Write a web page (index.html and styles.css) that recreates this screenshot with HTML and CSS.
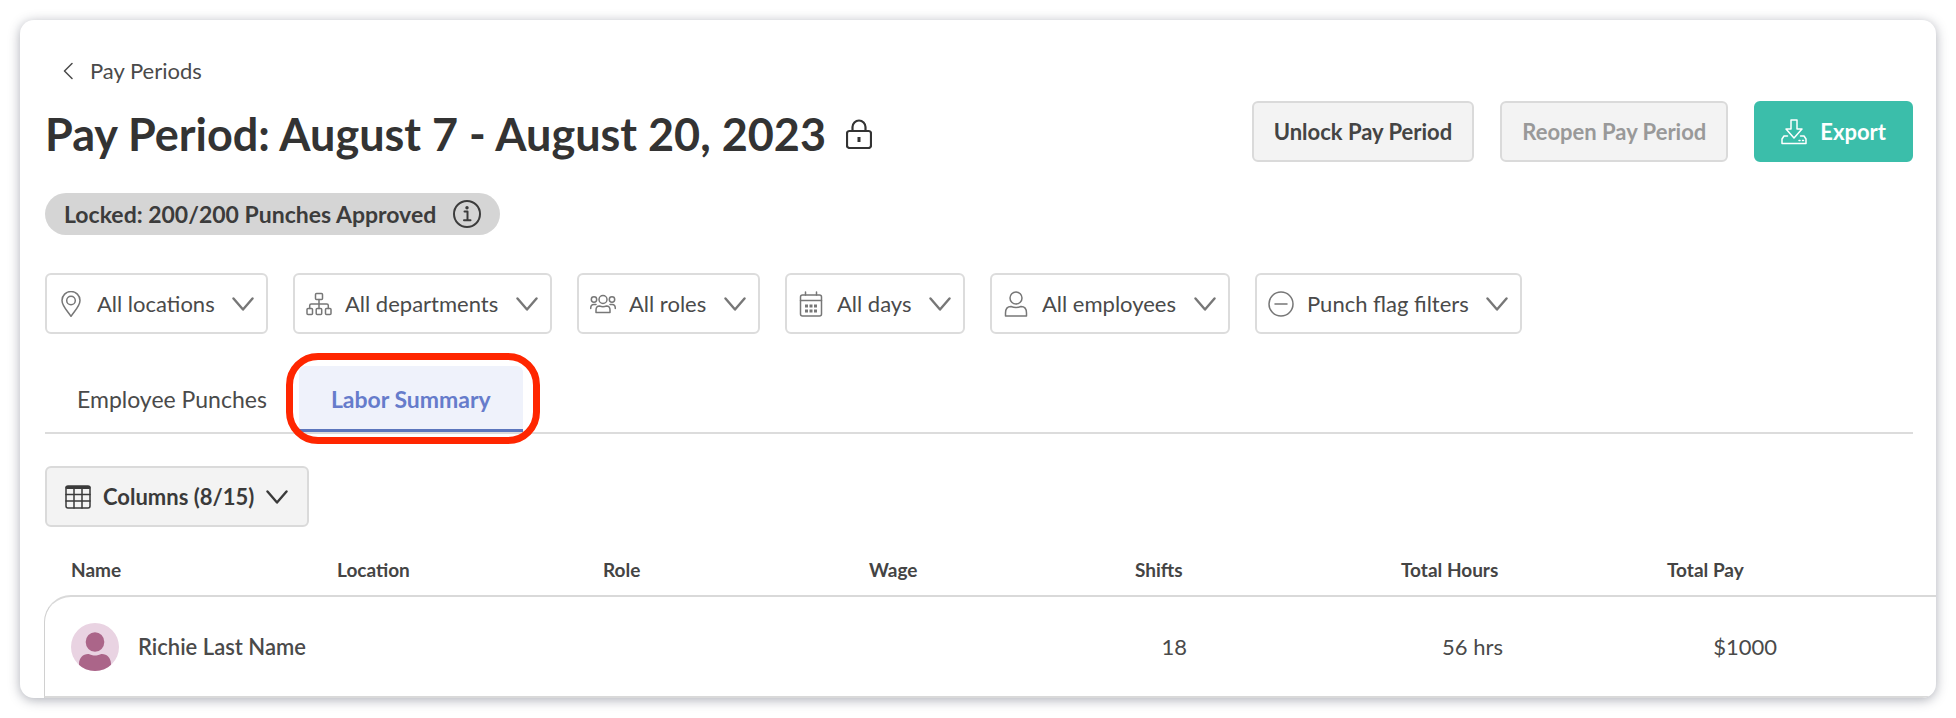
FILE: index.html
```html
<!DOCTYPE html>
<html lang="en">
<head>
    <meta charset="UTF-8">
    <meta name="viewport" content="width=device-width, initial-scale=1.0">
    <title>Pay Period</title>
    <link rel="stylesheet" href="styles.css">
</head>
<body>

<main class="card">
    <a class="back" href="#">
        <svg class="back-icon" viewBox="0 0 10 18"><path d="M9 1.5 1.5 9 9 16.5"/></svg>
        Pay Periods
    </a>

    <header class="header">
        <h1 class="title">
            Pay Period: August 7 - August 20, 2023
            <svg class="lock" viewBox="0 0 26 30"><rect x="1" y="12" width="24" height="17" rx="2.5"/><path d="M6.5 12V8a6.500 6.500 0 0 1 13 0v4"/><path class="keyhole" d="M13 18v5"/></svg>
        </h1>
        <div class="actions">
            <button class="btn">Unlock Pay Period</button>
            <button class="btn" disabled>Reopen Pay Period</button>
            <button class="btn btn-primary">
                <svg class="icon" viewBox="0 0 26 26"><path d="M10 1h6v9h5l-8 9-8-9h5zM6.500 17H3l-2 3v4.500h24V20l-2-3h-3.500M18 21.500h1M21.500 21.500h1"/></svg>
                Export
            </button>
        </div>
    </header>

    <div class="status">
        Locked: 200/200 Punches Approved
        <svg class="info" viewBox="0 0 28 28"><circle cx="14" cy="14" r="13"/><path d="M11.500 11.500H14.500V20M11 20.200h6.500"/><circle class="dot" cx="14" cy="7.800" r="1.700"/></svg>
    </div>

    <div class="filters">
        <label class="filter">
            <svg class="icon" viewBox="0 0 26 26"><path d="M13 25.300C9.500 20 4 15 4 9.500a9 9 0 0 1 18 0C22 15 16.500 20 13 25.300z"/><circle cx="13" cy="9.500" r="4.300"/></svg>
            <select aria-label="Locations"><option>All locations</option></select>
            <svg class="chevron" viewBox="0 0 22 14"><path d="M1.500 1.500 11 12.500l9.500-11"/></svg>
        </label>
        <label class="filter">
            <svg class="icon" viewBox="0 0 26 26"><rect x="9.500" y="2.500" width="7" height="6" rx="1"/><rect x="1" y="17.500" width="5.500" height="6" rx="1"/><rect x="10.200" y="17.500" width="5.500" height="6" rx="1"/><rect x="19.500" y="17.500" width="5.500" height="6" rx="1"/><path d="M13 8.500v9M3.700 17.500v-3q0-1.500 1.500-1.500h15.600q1.500 0 1.500 1.500v3"/></svg>
            <select aria-label="Departments"><option>All departments</option></select>
            <svg class="chevron" viewBox="0 0 22 14"><path d="M1.500 1.500 11 12.500l9.500-11"/></svg>
        </label>
        <label class="filter">
            <svg class="icon" viewBox="0 0 26 26"><circle cx="13" cy="8.500" r="4"/><circle cx="4" cy="8.500" r="2.700"/><circle cx="22" cy="8.500" r="2.700"/><path d="M6 21.500v-2.500c0-3 2-4 3.500-4q3.500 1.300 7 0c1.500 0 3.500 1 3.500 4v2.500zM.700 17.500c0-2.500 1-4 3-4H6M25.300 17.500c0-2.500-1-4-3-4H20"/></svg>
            <select aria-label="Roles"><option>All roles</option></select>
            <svg class="chevron" viewBox="0 0 22 14"><path d="M1.500 1.500 11 12.500l9.500-11"/></svg>
        </label>
        <label class="filter">
            <svg class="icon" viewBox="0 0 26 26"><rect x="2.500" y="4" width="21" height="21" rx="2"/><path d="M2.500 9.500h21M7.500 1v3M18.500 1v3"/><path class="days" d="M7 15h3M11.500 15h3M16 15h3M7 20h3M11.500 20h3M16 20h3"/></svg>
            <select aria-label="Days"><option>All days</option></select>
            <svg class="chevron" viewBox="0 0 22 14"><path d="M1.500 1.500 11 12.500l9.500-11"/></svg>
        </label>
        <label class="filter">
            <svg class="icon" viewBox="0 0 26 26"><circle cx="13" cy="7" r="6"/><path d="M2.500 25v-3c0-4 2-6.500 5.500-6.500q5 2 10 0c3.500 0 5.500 2.500 5.500 6.500v3z"/></svg>
            <select aria-label="Employees"><option>All employees</option></select>
            <svg class="chevron" viewBox="0 0 22 14"><path d="M1.500 1.500 11 12.500l9.500-11"/></svg>
        </label>
        <label class="filter">
            <svg class="icon" viewBox="0 0 26 26"><circle cx="13" cy="13" r="12"/><path d="M7 13h12"/></svg>
            <select aria-label="Punch flags"><option>Punch flag filters</option></select>
            <svg class="chevron" viewBox="0 0 22 14"><path d="M1.500 1.500 11 12.500l9.500-11"/></svg>
        </label>
    </div>

    <nav class="tabs">
        <a class="tab" href="#">Employee Punches</a>
        <a class="tab tab-active" href="#">Labor Summary</a>
    </nav>

    <button class="btn btn-columns">
        <svg class="icon" viewBox="0 0 26 26"><rect x="1" y="2" width="24" height="22" rx="2"/><path d="M1 10.500h24M1 17h24M9 4v20M17 4v20"/><path class="thick" d="M2 3.500h22"/></svg>
        Columns (8/15)
        <svg class="chevron" viewBox="0 0 22 14"><path d="M1.500 1.500 11 12.500l9.500-11"/></svg>
    </button>

    <table class="summary">
        <thead>
            <tr>
                <th>Name</th>
                <th>Location</th>
                <th>Role</th>
                <th>Wage</th>
                <th>Shifts</th>
                <th>Total Hours</th>
                <th>Total Pay</th>
                <th class="rest"></th>
            </tr>
        </thead>
        <tbody>
            <tr>
                <td>
                    <div class="person">
                        <svg class="avatar" viewBox="0 0 48 48">
                            <clipPath id="round"><circle cx="24" cy="24" r="24"/></clipPath>
                            <circle cx="24" cy="24" r="24" fill="#e9d3e2"/>
                            <g clip-path="url(#round)" fill="#ab6589">
                                <ellipse cx="24" cy="19" rx="9.300" ry="9.800"/>
                                <path d="M8 48v-7c0-6 4-10 9-10 2 0 3 1.500 7 1.500s5-1.500 7-1.500c5 0 9 4 9 10v7z"/>
                            </g>
                        </svg>
                        Richie Last Name
                    </div>
                </td>
                <td></td>
                <td></td>
                <td></td>
                <td><span class="num num-shifts">18</span></td>
                <td><span class="num num-hours">56 hrs</span></td>
                <td><span class="num num-pay">$1000</span></td>
                <td></td>
            </tr>
            <tr>
                <td></td>
                <td colspan="7"></td>
            </tr>
        </tbody>
    </table>
</main>

</body>
</html>
```

FILE: styles.css
```css
* {
    box-sizing: border-box;
}
body {
    margin: 0;
    padding: 20px;
    height: 100vh;
    background-color: #fff;
    color: #4a4a4a;
    font-family: Lato, "Open Sans", sans-serif;
    font-size: 22px;
    line-height: 26px;
}
svg {
    display: block;
    flex: none;
    fill: none;
    stroke: currentColor;
    stroke-width: 1.5;
    stroke-linecap: round;
    stroke-linejoin: round;
}
.card {
    height: 100%;
    padding: 38px 23px 0 25px;
    overflow: hidden;
    border-radius: 14px;
    background-color: #fff;
    box-shadow: 0 2px 12px rgba(50, 55, 75, 0.4);
}

/* header */
.back {
    display: flex;
    align-items: center;
    gap: 17px;
    width: max-content;
    margin-left: 18px;
    color: #4a4a4a;
    text-decoration: none;
}
.back-icon {
    width: 10px;
    height: 18px;
}
.header {
    display: flex;
    justify-content: space-between;
    align-items: flex-start;
    margin-top: 17px;
}
.title {
    display: flex;
    align-items: center;
    gap: 20px;
    margin: 0;
    color: #333;
    font-size: 45px;
    font-weight: 700;
    line-height: 66px;
}
.lock {
    width: 26px;
    height: 30px;
    stroke-width: 2.2;
}
.keyhole {
    stroke-width: 3;
    stroke-linecap: butt;
}
.actions {
    display: flex;
    gap: 26px;
}
.btn {
    display: flex;
    align-items: center;
    gap: 13px;
    height: 61px;
    padding: 0 20px;
    border: 2px solid #dadada;
    border-radius: 6px;
    background-color: #f3f3f3;
    color: #444;
    font: inherit;
    font-weight: 700;
    white-space: nowrap;
    cursor: pointer;
}
.btn:disabled {
    color: #999;
    cursor: default;
}
.btn-primary {
    padding: 0 25px;
    border-color: #3bbeaa;
    background-color: #3bbeaa;
    color: #fff;
}
.status {
    display: flex;
    align-items: center;
    gap: 17px;
    width: max-content;
    height: 42px;
    margin-top: 26px;
    padding: 0 19px;
    border-radius: 21px;
    background-color: #d5d5d5;
    color: #3c3c3c;
    font-size: 23px;
    font-weight: 700;
}
.info {
    width: 28px;
    height: 28px;
    stroke-width: 2;
}
.dot {
    fill: currentColor;
    stroke: none;
}

/* filters */
.filters {
    display: flex;
    gap: 25px;
    margin-top: 38px;
}
.filter {
    display: flex;
    align-items: center;
    height: 61px;
    padding: 0 12px 0 11px;
    border: 2px solid #dcdcdc;
    border-radius: 6px;
    color: #777;
}
.filter select {
    margin: 0 17px 0 13px;
    padding: 0;
    appearance: none;
    border: none;
    background: none;
    color: #4a4a4a;
    font: inherit;
    cursor: pointer;
}
.icon {
    width: 26px;
    height: 26px;
}
.days {
    stroke-width: 3;
    stroke-linecap: butt;
}
.chevron {
    width: 22px;
    height: 14px;
    stroke-width: 2.4;
}

/* tabs */
.tabs {
    display: flex;
    margin-top: 32px;
    border-bottom: 2px solid #dcdcdc;
    font-size: 23px;
}
.tab {
    padding: 20px 32px;
    color: #4a4a4a;
    text-decoration: none;
}
.tab-active {
    position: relative;
    padding-bottom: 17px;
    border-bottom: 3px solid #5c76bd;
    border-radius: 6px 6px 0 0;
    background-color: #eff2fb;
    color: #667ccb;
    font-weight: 700;
}
/* red ring around the active tab */
.tab-active::after {
    content: "";
    position: absolute;
    inset: -13px -17px -15px -13px;
    border: 7px solid #ff2600;
    border-radius: 32px;
    pointer-events: none;
}
.btn-columns {
    margin-top: 32px;
    padding: 0 19px 0 18px;
    gap: 12px;
    color: #3a3a3a;
}
.thick {
    stroke-width: 3;
}

/* table */
.summary {
    width: calc(100% + 24px);
    margin-left: -1px;
    border-spacing: 0;
    table-layout: fixed;
}
.summary th {
    width: 266px;
    height: 68px;
    padding: 17px 0 0 27px;
    color: #444;
    font-size: 19px;
    font-weight: 700;
    text-align: left;
}
.summary .rest {
    width: auto;
    padding: 0;
}
.summary td {
    height: 101px;
    padding: 0 0 0 27px;
    border-top: 2px solid #d9d9d9;
}
.summary td:first-child {
    padding-left: 26px;
    border-left: 1px solid #d0d0d0;
}
.summary tbody tr:first-child td:first-child {
    border-top-left-radius: 27px;
}
.summary td:last-child {
    padding: 0;
}
.person {
    display: flex;
    align-items: center;
    gap: 19px;
    font-weight: 600;
}
.avatar {
    width: 48px;
    height: 48px;
    stroke: none;
}
.num {
    display: block;
    text-align: right;
}
.num-shifts {
    width: 52px;
}
.num-hours {
    width: 102px;
}
.num-pay {
    width: 110px;
}
```
